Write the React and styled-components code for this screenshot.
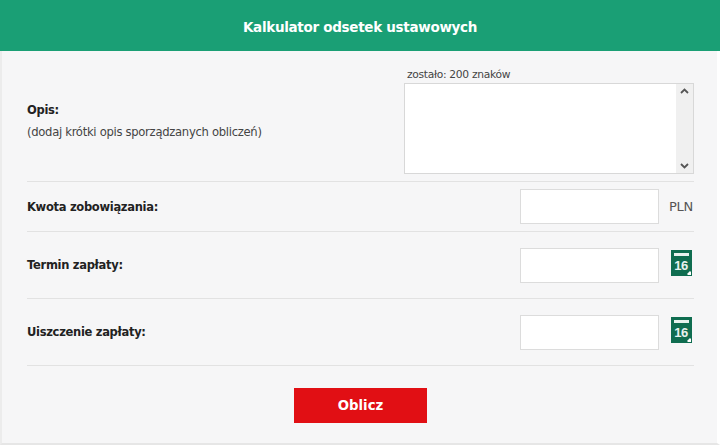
import styled, { createGlobalStyle } from "styled-components";

const Global = createGlobalStyle`
  html, body {
    margin: 0;
    background: #fff;
  }
  * {
    box-sizing: border-box;
  }
`;

const Panel = styled.div`
  width: 720px;
  height: 445px;
  background: #f6f6f7;
  border-left: 2px solid #ececec;
  border-right: 3px solid #fff;
  border-bottom: 2px solid #e6e6e6;
  font-family: "DejaVu Sans", "Noto Sans", sans-serif;
  font-size: 11.6px;
  letter-spacing: -0.3px;
  color: #444;
`;

const Header = styled.header`
  height: 51px;
  margin: 0 -3px 0 -2px;
  padding-top: 2px;
  background: #1a9f75;
  color: #fff;
  font-size: 13.5px;
  font-weight: 700;
  display: flex;
  align-items: center;
  justify-content: center;
`;

const Form = styled.form`
  padding: 0 23px 0 25px;
`;

const DescRow = styled.div`
  height: 131px;
  padding-top: 18px;
  border-bottom: 1px solid #e2e2e2;
  display: flex;
  justify-content: space-between;
`;

const DescLabel = styled.div`
  padding-top: 30px;
  line-height: 22px;
`;

const Label = styled.div`
  font-weight: 700;
  font-size: 11.5px;
  color: #222;
`;

const DescColumn = styled.div`
  width: 290px;
`;

const Counter = styled.div`
  font-size: 10.7px;
  line-height: 14px;
  padding-left: 3px;
  margin-top: -1px;
  margin-bottom: 1px;
`;

const TextBox = styled.div`
  height: 91px;
  background: #fff;
  border: 1px solid #d8d8d8;
  display: flex;
  justify-content: flex-end;
`;

const ScrollBar = styled.div`
  width: 17px;
  background: #f0f0f0;
  display: flex;
  flex-direction: column;
  justify-content: space-between;
  align-items: center;
  padding: 4px 0;
`;

const Row = styled.div`
  height: ${(p) => p.$height}px;
  border-bottom: 1px solid #e2e2e2;
  display: flex;
  align-items: center;
  justify-content: space-between;
`;

const Controls = styled.div`
  display: flex;
  align-items: center;
`;

const Input = styled.input`
  width: 139px;
  height: 35px;
  background: #fff;
  border: 1px solid #dcdcdc;
  outline: none;
`;

const Unit = styled.span`
  width: 35px;
  padding-left: 10px;
  font-size: 13px;
  color: #555;
`;

const IconSlot = styled.span`
  width: 35px;
  padding-left: 12px;
  margin-bottom: 5px;
  display: flex;
`;

const Footer = styled.div`
  display: flex;
  justify-content: center;
  padding-top: 22px;
`;

const Button = styled.button`
  width: 133px;
  height: 35px;
  border: none;
  background: #e10f14;
  color: #fff;
  font-family: inherit;
  font-size: 13.3px;
  font-weight: 700;
`;

function Arrow({ up }) {
  return (
    <svg width="9" height="6" viewBox="0 0 9 6">
      <path
        d={up ? "M1 5 4.5 1.5 8 5" : "M1 1 4.5 4.5 8 1"}
        fill="none"
        stroke="#555"
        strokeWidth="1.8"
      />
    </svg>
  );
}

function CalendarIcon() {
  return (
    <svg width="21" height="26" viewBox="0 0 21 26">
      <rect width="21" height="26" fill="#0f6d50" />
      <rect x="3" y="3" width="15" height="3" fill="#e8f2ee" />
      <text
        x="10"
        y="20"
        textAnchor="middle"
        fontFamily="'Liberation Sans', sans-serif"
        fontSize="13"
        fontWeight="700"
        letterSpacing="-0.5"
        fill="#e8f2ee"
      >
        16
      </text>
      <path d="M16 24 19 21 20 22 20 25 17 25Z" fill="#fff" />
    </svg>
  );
}

function DateRow({ label, height }) {
  return (
    <Row $height={height}>
      <Label>{label}</Label>
      <Controls>
        <Input />
        <IconSlot>
          <CalendarIcon />
        </IconSlot>
      </Controls>
    </Row>
  );
}

export default function App() {
  return (
    <>
      <Global />
      <Panel>
        <Header>Kalkulator odsetek ustawowych</Header>
        <Form>
          <DescRow>
            <DescLabel>
              <Label>Opis:</Label>
              <div>(dodaj krótki opis sporządzanych obliczeń)</div>
            </DescLabel>
            <DescColumn>
              <Counter>zostało: 200 znaków</Counter>
              <TextBox>
                <ScrollBar>
                  <Arrow up />
                  <Arrow />
                </ScrollBar>
              </TextBox>
            </DescColumn>
          </DescRow>
          <Row $height={50}>
            <Label>Kwota zobowiązania:</Label>
            <Controls>
              <Input />
              <Unit>PLN</Unit>
            </Controls>
          </Row>
          <DateRow label="Termin zapłaty:" height={67} />
          <DateRow label="Uiszczenie zapłaty:" height={67} />
          <Footer>
            <Button type="button">Oblicz</Button>
          </Footer>
        </Form>
      </Panel>
    </>
  );
}
